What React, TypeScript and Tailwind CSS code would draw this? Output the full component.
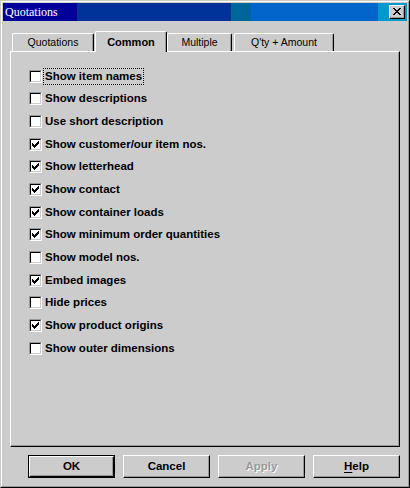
const options = [
  { label: 'Show item names', checked: false, focus: true },
  { label: 'Show descriptions', checked: false },
  { label: 'Use short description', checked: false },
  { label: 'Show customer/our item nos.', checked: true },
  { label: 'Show letterhead', checked: true },
  { label: 'Show contact', checked: true },
  { label: 'Show container loads', checked: true },
  { label: 'Show minimum order quantities', checked: true },
  { label: 'Show model nos.', checked: false },
  { label: 'Embed images', checked: true },
  { label: 'Hide prices', checked: false },
  { label: 'Show product origins', checked: true },
  { label: 'Show outer dimensions', checked: false },
];

const tabs = [
  { label: 'Quotations', w: 'w-[82px]', active: false },
  { label: 'Common', w: 'w-[72px] ml-[1px]', active: true },
  { label: 'Multiple', w: 'w-[65px]', active: false },
  { label: "Q'ty + Amount", w: 'w-[100px] ml-[2px]', active: false },
];

function CheckBox({ checked }: { checked: boolean }) {
  return (
    <span className="flex w-[13px] h-[13px] shrink-0 border border-t-[#999] border-l-[#999] border-r-white border-b-white">
      <span className="flex w-full h-full bg-white border border-t-black border-l-black border-r-[#ccc] border-b-[#ccc]">
        {checked && (
          <svg width="7" height="7" viewBox="0 0 7 7" className="m-[1px]" shapeRendering="crispEdges">
            <path d="M6 0H7V3H6V4H5V5H4V6H3V7H2V6H1V5H0V2H1V3H2V4H3V3H4V2H5V1H6Z" fill="#000" />
          </svg>
        )}
      </span>
    </span>
  );
}

function Button({ children, isDefault, disabled }: { children: React.ReactNode; isDefault?: boolean; disabled?: boolean }) {
  const inner = (
    <div className="w-full h-full flex items-center justify-center border border-t-white border-l-white border-r-black border-b-black shadow-[inset_-1px_-1px_0_#999]">
      <span
        className={
          disabled
            ? 'text-[#999] [text-shadow:1px_1px_0_#fff]'
            : 'text-black'
        }
      >
        {children}
      </span>
    </div>
  );
  if (isDefault) {
    return <div className="w-[87px] h-[23px] border border-black">{inner}</div>;
  }
  return <div className="w-[87px] h-[23px]">{inner}</div>;
}

export default function App() {
  return (
    <div className="w-[410px] h-[488px] bg-[#ccc] border border-t-[#ccc] border-l-[#ccc] border-r-black border-b-black font-['Liberation_Sans',Arial,sans-serif] select-none">
      <div className="h-full border border-t-white border-l-white border-r-[#999] border-b-[#999] p-[1px] flex flex-col">
        {/* title bar */}
        <div className="h-[18px] flex items-center justify-between pl-[2px] pr-[2px] bg-[linear-gradient(90deg,#000099_74px,#003399_74px,#003399_228px,#006699_228px,#006699_248px,#0066cc_248px,#0066cc_375px,#0099cc_375px)]">
          <span className="text-white text-[12px] leading-none font-['Liberation_Serif',serif]">Quotations</span>
          <div className="w-[16px] h-[14px] bg-[#ccc] border border-t-white border-l-white border-r-black border-b-black shadow-[inset_-1px_-1px_0_#999] flex items-center justify-center">
            <svg width="8" height="7" viewBox="0 0 8 7" shapeRendering="crispEdges" className="mb-[1px] mr-[1px]">
              <path
                d="M0 0h2v1h-2z M6 0h2v1h-2z M1 1h2v1h-2z M5 1h2v1h-2z M2 2h4v1h-4z M3 3h2v1h-2z M2 4h4v1h-4z M1 5h2v1h-2z M5 5h2v1h-2z M0 6h2v1h-2z M6 6h2v1h-2z"
                fill="#000"
              />
            </svg>
          </div>
        </div>

        <div className="px-[7px] flex flex-col">
          {/* tabs */}
          <div className="mt-[10px] h-[20px] flex items-end pl-[2px]">
            {tabs.map((t) =>
              t.active ? (
                <div
                  key={t.label}
                  className={`${t.w} relative z-10 h-[21px] -mb-[1px] bg-[#ccc] flex items-start justify-center pt-[2px] rounded-t-[2px] border-t border-l border-r border-t-white border-l-white border-r-black shadow-[inset_-1px_0_0_#999] text-[11px] font-bold text-black`}
                >
                  {t.label}
                </div>
              ) : (
                <div
                  key={t.label}
                  className={`${t.w} h-[18px] flex items-center justify-center rounded-t-[2px] border-t border-l border-r border-t-white border-l-white border-r-black shadow-[inset_-1px_0_0_#999] text-[10.5px] text-black`}
                >
                  {t.label}
                </div>
              )
            )}
          </div>

          {/* panel */}
          <div className="h-[396px] border border-t-white border-l-white border-r-black border-b-black shadow-[inset_-1px_-1px_0_#999] pt-[13px] pl-[18px]">
            {options.map((o) => (
              <div key={o.label} className="h-[22.67px] flex items-center">
                <CheckBox checked={o.checked} />
                <span
                  className={`ml-[1px] px-[1px] leading-[15px] text-[11.5px] font-bold text-black border ${
                    o.focus ? 'border-dotted border-black' : 'border-transparent'
                  }`}
                >
                  {o.label}
                </span>
              </div>
            ))}
          </div>

          {/* buttons */}
          <div className="mt-[8px] flex justify-end gap-[8px] text-[11.5px] font-bold">
            <Button isDefault>OK</Button>
            <Button>Cancel</Button>
            <Button disabled>Apply</Button>
            <Button>
              <span className="underline underline-offset-2">H</span>elp
            </Button>
          </div>
        </div>
      </div>
    </div>
  );
}
